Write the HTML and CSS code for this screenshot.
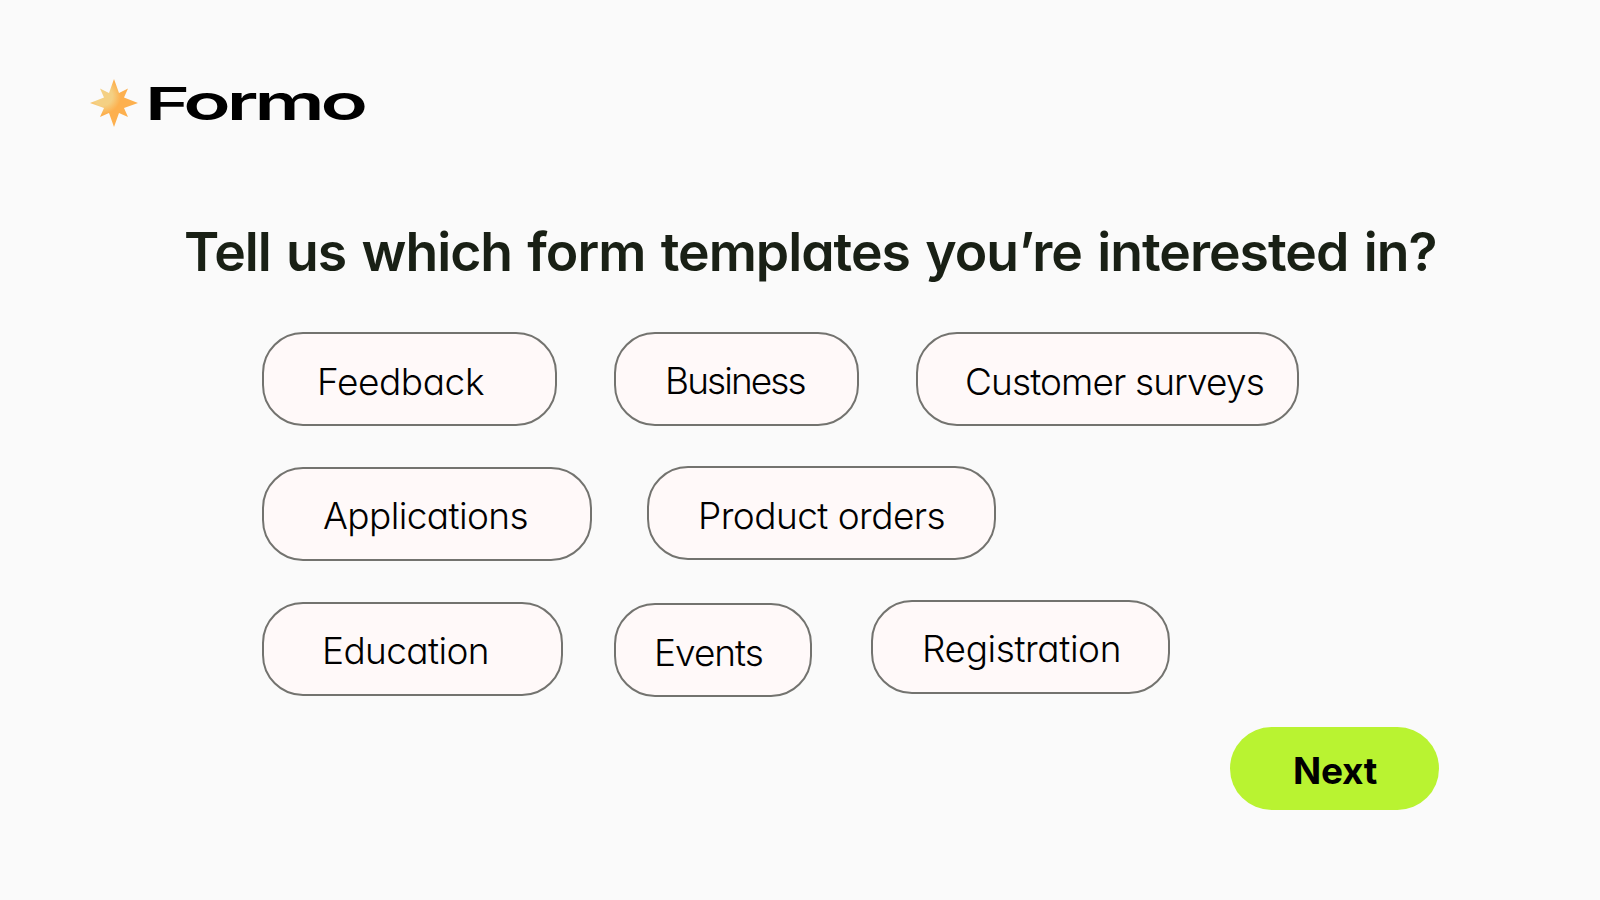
FILE: index.html
```
<!DOCTYPE html>
<html lang="en">
<head>
  <meta charset="UTF-8" />
  <meta name="viewport" content="width=device-width, initial-scale=1.0"/>
  <title>Formo | Templates</title>
  <link rel="stylesheet" href="styles.css">
</head>
<body>

  <header class="logo">
    <svg class="logo-star" viewBox="0 0 48 48">
      <defs>
        <radialGradient id="star-fill" gradientUnits="userSpaceOnUse" cx="13" cy="17" r="21">
          <stop offset="0.45" stop-color="#f4d083"/>
          <stop offset="0.85" stop-color="#fdb04e"/>
        </radialGradient>
      </defs>
      <path fill="url(#star-fill)" d="M24 0 L29 14 L38 9.500 L34 18.500 L48 24 L34 29 L38 38 L29 34 L24 48 L19 34 L10 38 L14 29 L0 24 L14 18.500 L10 9.500 L19 14 Z"/>
    </svg>
    <div class="logo-name"><span class="logo-cap">F</span>ormo</div>
  </header>

  <main>
    <h1>Tell us which form templates you’re interested in?</h1>

    <!-- Templates -->
    <div class="row">
      <button class="pill feedback">Feedback</button>
      <button class="pill business">Business</button>
      <button class="pill surveys">Customer surveys</button>
    </div>
    <div class="row">
      <button class="pill applications">Applications</button>
      <button class="pill orders">Product orders</button>
    </div>
    <div class="row">
      <button class="pill education">Education</button>
      <button class="pill events">Events</button>
      <button class="pill registration">Registration</button>
    </div>
  </main>

  <footer>
    <button class="next">Next</button>
  </footer>

</body>
</html>
```
FILE: styles.css
```
* {
  box-sizing: border-box;
}

body {
  margin: 0;
  height: 900px;
  overflow: hidden;
  padding: 79px 161px 0 90px;
  background: #fafafa;
  font-family: Inter, sans-serif;
  font-feature-settings: "cv11";
  color: #000;
}

.logo {
  display: flex;
  align-items: center;
  height: 48px;
}

.logo-star {
  width: 48px;
  height: 48px;
}

.logo-name {
  margin-left: 7px;
  font-size: 50px;
  font-weight: 600;
  line-height: 48px;
  letter-spacing: -2.6px;
  transform: scaleX(1.56);
  transform-origin: left;
}

.logo-cap {
  display: inline-block;
  font-size: 44.5px;
  letter-spacing: -1.6px;
  transform: scaleX(1.1);
  transform-origin: left;
}

h1 {
  margin: 92px 0 0 94px;
  font-size: 53.5px;
  font-weight: 600;
  line-height: 66px;
  letter-spacing: -1px;
  word-spacing: 2.8px;
  white-space: nowrap;
  color: #192015;
}

.row {
  display: flex;
  align-items: flex-start;
  height: 94px;
  margin: 0 0 41px 172px;
}

h1 + .row {
  margin-top: 47px;
}

.pill {
  height: 94px;
  padding: 0;
  border: 2px solid #73736f;
  border-radius: 41px;
  background: #fff9f9;
  font: 300 37px/94px Inter, sans-serif;
  font-feature-settings: "cv11";
  color: #000;
  text-align: left;
  white-space: nowrap;
}

.feedback {
  width: 295px;
  padding-left: 53px;
  letter-spacing: -0.4px;
  line-height: 96px;
}

.business {
  width: 245px;
  margin-left: 57px;
  padding-left: 49px;
  letter-spacing: -1.9px;
}

.surveys {
  width: 383px;
  margin-left: 57px;
  padding-left: 47px;
  letter-spacing: -0.88px;
  line-height: 96px;
}

.applications {
  width: 330px;
  padding-left: 59px;
  letter-spacing: -0.6px;
}

.orders {
  width: 349px;
  margin-left: 55px;
  margin-top: -1px;
  padding-left: 49px;
  letter-spacing: -0.55px;
  line-height: 96px;
}

.education {
  width: 301px;
  padding-left: 58px;
  letter-spacing: -0.6px;
}

.events {
  width: 198px;
  margin-left: 51px;
  margin-top: 1px;
  padding-left: 38px;
  letter-spacing: -1px;
  line-height: 96px;
}

.registration {
  width: 299px;
  margin-left: 59px;
  margin-top: -2px;
  padding-left: 49px;
  letter-spacing: -0.4px;
}

footer {
  display: flex;
  justify-content: flex-end;
  margin-top: -10px;
}

.next {
  width: 209px;
  height: 83px;
  padding: 1px 0 0 1px;
  border: 0;
  border-radius: 42px;
  background: #b9f331;
  font: 700 37px/86px Inter, sans-serif;
  letter-spacing: -0.3px;
  color: #000;
}
```
